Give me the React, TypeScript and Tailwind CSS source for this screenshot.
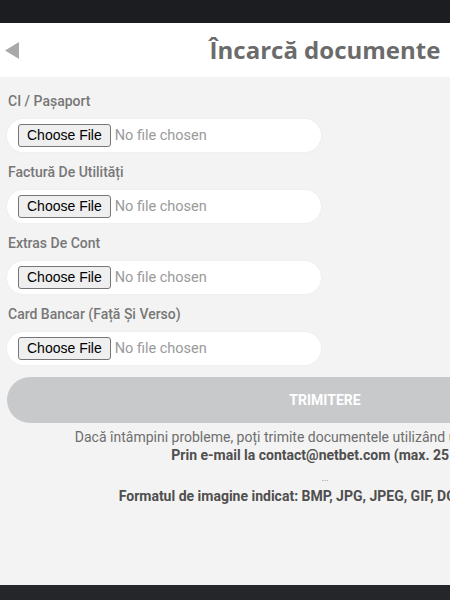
import React from 'react';

const fields = ['CI / Pașaport', 'Factură De Utilități', 'Extras De Cont', 'Card Bancar (Față Și Verso)'];

const UploadRow: React.FC<{ label: string }> = ({ label }) => (
  <div className="flex flex-col">
    <label className="h-[20px] leading-[20px] pl-[1px] text-[14px] font-medium text-[#777]">{label}</label>
    <div className="mt-[8px] flex h-[33px] w-[314px] items-center rounded-full bg-white pl-[11px] shadow-[0_0_3px_rgba(0,0,0,0.04)]">
      <input
        type="file"
        className="text-[14.5px] text-[#9a9a9a] file:mr-[4px] file:h-[23px] file:rounded-[3px] file:border file:border-[#767676] file:bg-[#efefef] file:px-[8px] file:font-['Liberation_Sans',Arial,sans-serif] file:text-[14px] file:text-black"
      />
    </div>
  </div>
);

const App: React.FC = () => {
  return (
    <div className="flex h-[600px] w-[450px] flex-col overflow-hidden bg-[#f3f3f3] font-['Roboto',sans-serif]">
      <div className="h-[23px] shrink-0 bg-[#1c1d21]" />

      <div className="flex w-[650px] flex-1 flex-col">
        {/* Header */}
        <div className="grid h-[54px] shrink-0 grid-cols-[1fr_auto_1fr] items-center bg-white">
          <div className="pl-[5px]">
            <svg width="15" height="17" viewBox="0 0 15 17">
              <polygon points="14,0 14,17 0,8.5" fill="#a9a9a9" />
            </svg>
          </div>
          <h1 className="font-['Open_Sans',sans-serif] text-[24px] font-bold text-[#6b6b6b]">Încarcă documente</h1>
          <div />
        </div>

        {/* Form */}
        <div className="flex flex-col px-[7px] pt-[14px]">
          <div className="flex flex-col gap-[10px]">
            {fields.map((f) => (
              <UploadRow key={f} label={f} />
            ))}
          </div>

          <button className="mt-[12px] h-[46px] w-full rounded-full bg-[#c8c9cb] text-[14px] font-bold uppercase text-white">
            Trimitere
          </button>

          <div className="mt-[5px] flex flex-col items-center text-[14px] leading-[18px]">
            <p className="text-[#6e6e6e]">Dacă întâmpini probleme, poți trimite documentele utilizând următoarea metodă:</p>
            <p className="font-bold text-[#4f4f4f]">Prin e-mail la contact@netbet.com (max. 25 MB)</p>
            <p className="mt-[5px] text-[9px] text-[#777]">...</p>
            <p className="font-bold text-[#4f4f4f]">Formatul de imagine indicat: BMP, JPG, JPEG, GIF, DOC, PDF, PNG</p>
          </div>
        </div>
      </div>

      <div className="h-[15px] shrink-0 bg-[#25262a]" />
    </div>
  );
};

export default App;
